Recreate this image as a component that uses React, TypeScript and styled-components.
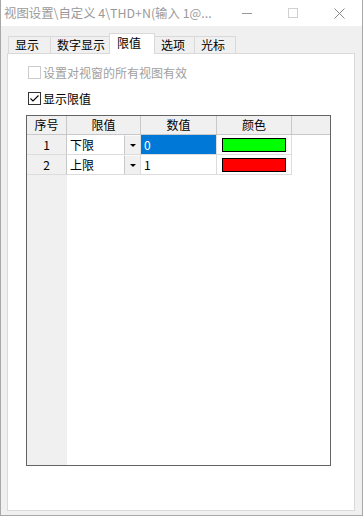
import React from "react";
import styled, { createGlobalStyle } from "styled-components";

const GlobalStyle = createGlobalStyle`
  html, body {
    margin: 0;
    padding: 0;
    background: #3c3c3c;
  }
  body {
    font-family: "Noto Sans CJK SC", "Noto Sans", sans-serif;
    font-size: 12px;
  }
`;

const Window = styled.div`
  width: 363px;
  height: 516px;
  box-sizing: border-box;
  border: 1px solid #a8a8a8;
  border-top: none;
  display: flex;
  flex-direction: column;
  background: #f0f0f0;
`;

const TitleBar = styled.div`
  height: 26px;
  flex-shrink: 0;
  display: flex;
  align-items: center;
  background: #fff;
`;

const Title = styled.div`
  flex: 1;
  padding-left: 3px;
  color: #9a9a9a;
  font-size: 12.4px;
  line-height: 16px;
  white-space: nowrap;
  overflow: hidden;
`;

const CaptionBtn = styled.div`
  width: 46px;
  height: 26px;
  display: flex;
  align-items: center;
  justify-content: center;
`;

const Body = styled.div`
  flex: 1;
  display: flex;
  flex-direction: column;
  padding: 7px 7px 4px 6px;
`;

const TabStrip = styled.div`
  display: flex;
  align-items: flex-end;
  height: 21px;
  padding-left: 1px;
  margin-bottom: -1px;
  position: relative;
  z-index: 1;
`;

const Tab = styled.div<{ $active?: boolean; $w: number }>`
  box-sizing: border-box;
  width: ${({ $w }) => $w}px;
  height: ${({ $active }) => ($active ? 21 : 17)}px;
  margin-bottom: ${({ $active }) => ($active ? 0 : 1)}px;
  padding-left: ${({ $active }) => ($active ? 7 : 6)}px;
  padding-bottom: ${({ $active }) => ($active ? 2 : 0)}px;
  border: 1px solid #d9d9d9;
  border-bottom: none;
  margin-right: -1px;
  background: ${({ $active }) => ($active ? "#fff" : "#f0f0f0")};
  color: #000;
  display: flex;
  align-items: center;
  line-height: 16px;
  white-space: nowrap;
  position: relative;
  z-index: ${({ $active }) => ($active ? 2 : 1)};
`;

const Panel = styled.div`
  flex: 1;
  box-sizing: border-box;
  border: 1px solid #d9d9d9;
  background: #fff;
  padding: 12px 0 0 18px;
  display: flex;
  flex-direction: column;
`;

const CheckRow = styled.label<{ $disabled?: boolean }>`
  display: flex;
  align-items: center;
  gap: 2px;
  margin-left: 2px;
  height: 13px;
  margin-bottom: 13px;
  color: ${({ $disabled }) => ($disabled ? "#a0a0a0" : "#000")};
  line-height: 13px;
  white-space: nowrap;
`;

const Box = styled.span<{ $disabled?: boolean }>`
  width: 13px;
  height: 13px;
  box-sizing: border-box;
  border: 1px solid ${({ $disabled }) => ($disabled ? "#cccccc" : "#333")};
  background: #fff;
  display: flex;
  align-items: center;
  justify-content: center;
  flex-shrink: 0;
`;

const Grid = styled.div`
  width: 305px;
  height: 351px;
  margin-top: -3px;
  box-sizing: border-box;
  border: 1px solid #646464;
  display: flex;
  background: #fff;
`;

const RowHeaderCol = styled.div`
  width: 40px;
  background: #f0f0f0;
  display: flex;
  flex-direction: column;
`;

const DataArea = styled.div`
  flex: 1;
  display: flex;
  flex-direction: column;
`;

const HeaderBand = styled.div`
  height: 19px;
  box-sizing: border-box;
  background: #f0f0f0;
  border-bottom: 1px solid #c8c8c8;
  display: flex;
`;

const HeadCell = styled.div<{ $w: number; $corner?: boolean }>`
  width: ${({ $w }) => $w}px;
  height: ${({ $corner }) => ($corner ? "19px" : "auto")};
  box-sizing: border-box;
  border-right: 1px solid #c8c8c8;
  border-bottom: ${({ $corner }) => ($corner ? "1px solid #c8c8c8" : "none")};
  display: flex;
  align-items: center;
  justify-content: center;
  line-height: 16px;
  color: #000;
`;

const RowNum = styled.div`
  height: 20px;
  box-sizing: border-box;
  border-right: 1px solid #c8c8c8;
  border-bottom: 1px solid #dcdcdc;
  display: flex;
  align-items: center;
  justify-content: center;
  line-height: 16px;
`;

const DataRow = styled.div`
  height: 20px;
  display: flex;
`;

const Cell = styled.div<{ $w: number; $selected?: boolean; $combo?: boolean }>`
  width: ${({ $w }) => $w}px;
  box-sizing: border-box;
  border-right: 1px solid #dcdcdc;
  border-bottom: 1px solid #dcdcdc;
  background: ${({ $selected }) => ($selected ? "#0078d7" : "#fff")};
  color: ${({ $selected }) => ($selected ? "#fff" : "#000")};
  display: flex;
  align-items: center;
  padding-left: 3px;
  padding-right: 0;
  line-height: 16px;
`;

const ComboText = styled.span`
  flex: 1;
`;

const DropBtn = styled.span`
  width: 16px;
  height: 19px;
  box-sizing: border-box;
  background: #f0f0f0;
  border-left: 1px solid #c8c8c8;
  border-top: 1px solid #fafafa;
  display: flex;
  align-items: center;
  justify-content: center;
`;

const Triangle = styled.span`
  width: 0;
  height: 0;
  border-left: 3px solid transparent;
  border-right: 3px solid transparent;
  border-top: 3px solid #000;
`;

const ColorCell = styled(Cell)`
  justify-content: center;
  padding-left: 0;
`;

const Swatch = styled.span<{ $color: string }>`
  width: 64px;
  height: 14px;
  box-sizing: border-box;
  border: 1px solid #000;
  background: ${({ $color }) => $color};
`;

const rows = [
  { n: 1, limit: "下限", value: "0", color: "#00ff00", selected: true },
  { n: 2, limit: "上限", value: "1", color: "#ff0000", selected: false },
];

const tabs = [
  { label: "显示", w: 43 },
  { label: "数字显示", w: 60 },
  { label: "限值", w: 46, active: true },
  { label: "选项", w: 41 },
  { label: "光标", w: 42 },
];

export default function App() {
  return (
    <>
      <GlobalStyle />
      <Window>
        <TitleBar>
          <Title>视图设置\自定义 4\THD+N(输入 1@...</Title>
          <CaptionBtn>
            <svg width="10" height="10" viewBox="0 0 10 10">
              <line x1="0" y1="5.5" x2="10" y2="5.5" stroke="#999" strokeWidth="1" />
            </svg>
          </CaptionBtn>
          <CaptionBtn>
            <svg width="10" height="10" viewBox="0 0 10 10">
              <rect x="0.5" y="0.5" width="9" height="9" fill="none" stroke="#d0d0d0" strokeWidth="1" />
            </svg>
          </CaptionBtn>
          <CaptionBtn>
            <svg width="11" height="11" viewBox="0 0 11 11">
              <path d="M0.5 0.5 L10.5 10.5 M10.5 0.5 L0.5 10.5" stroke="#888" strokeWidth="1" />
            </svg>
          </CaptionBtn>
        </TitleBar>
        <Body>
          <TabStrip>
            {tabs.map((t) => (
              <Tab key={t.label} $w={t.w} $active={t.active}>
                {t.label}
              </Tab>
            ))}
          </TabStrip>
          <Panel>
            <CheckRow $disabled>
              <Box $disabled />
              设置对视窗的所有视图有效
            </CheckRow>
            <CheckRow>
              <Box>
                <svg width="11" height="11" viewBox="0 0 11 11">
                  <path d="M1.5 5.5 L4 8 L9.5 2.5" fill="none" stroke="#000" strokeWidth="1.1" />
                </svg>
              </Box>
              显示限值
            </CheckRow>
            <Grid>
              <RowHeaderCol>
                <HeadCell $w={40} $corner>
                  序号
                </HeadCell>
                {rows.map((r) => (
                  <RowNum key={r.n}>{r.n}</RowNum>
                ))}
              </RowHeaderCol>
              <DataArea>
                <HeaderBand>
                  <HeadCell $w={74}>限值</HeadCell>
                  <HeadCell $w={76}>数值</HeadCell>
                  <HeadCell $w={75}>颜色</HeadCell>
                </HeaderBand>
                {rows.map((r) => (
                  <DataRow key={r.n}>
                    <Cell $w={74}>
                      <ComboText>{r.limit}</ComboText>
                      <DropBtn>
                        <Triangle />
                      </DropBtn>
                    </Cell>
                    <Cell $w={76} $selected={r.selected}>
                      {r.value}
                    </Cell>
                    <ColorCell $w={75}>
                      <Swatch $color={r.color} />
                    </ColorCell>
                  </DataRow>
                ))}
              </DataArea>
            </Grid>
          </Panel>
        </Body>
      </Window>
    </>
  );
}
